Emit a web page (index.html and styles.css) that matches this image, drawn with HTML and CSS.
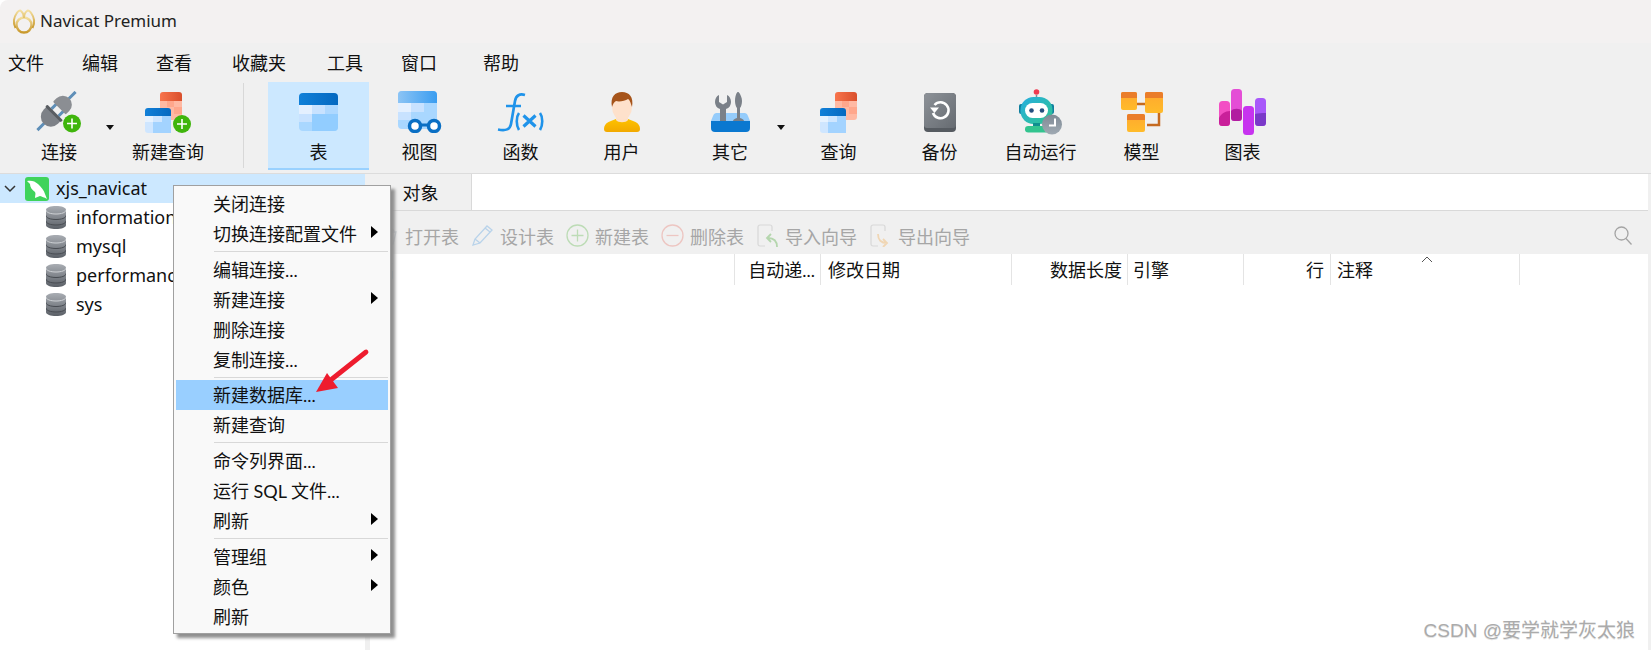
FILE: index.html
```html
<!DOCTYPE html>
<html lang="zh-CN">
<head>
<meta charset="utf-8">
<title>Navicat Premium</title>
<link rel="stylesheet" href="styles.css">
</head>
<body>
<svg class="defs" width="0" height="0">
  <defs>
    <linearGradient id="blueHead" x1="0" y1="0" x2="1" y2="0"><stop offset="0" stop-color="#1180d8"/><stop offset="1" stop-color="#0468c0"/></linearGradient>
    <linearGradient id="viewHead" x1="0" y1="0" x2="1" y2="0"><stop offset="0" stop-color="#8cc4f5"/><stop offset="1" stop-color="#3a9df0"/></linearGradient>
    <linearGradient id="redHead" x1="0" y1="0" x2="1" y2="0"><stop offset="0" stop-color="#f8744c"/><stop offset="1" stop-color="#d94f2c"/></linearGradient>
    <linearGradient id="backup" x1="0" y1="0" x2="1" y2="1"><stop offset="0" stop-color="#8d9298"/><stop offset="1" stop-color="#666b71"/></linearGradient>
    <linearGradient id="robot" x1="0" y1="0" x2="1" y2="1"><stop offset="0" stop-color="#27aee0"/><stop offset="1" stop-color="#2fc48f"/></linearGradient>
    <linearGradient id="orange" x1="0" y1="0" x2="0" y2="1"><stop offset="0" stop-color="#ffa82e"/><stop offset="1" stop-color="#ffbb2a"/></linearGradient>
    <linearGradient id="user" x1="0" y1="0" x2="0" y2="1"><stop offset="0" stop-color="#ffc400"/><stop offset="1" stop-color="#f2a900"/></linearGradient>
    <linearGradient id="dbGrey" x1="0" y1="0" x2="0" y2="1"><stop offset="0" stop-color="#a9adb3"/><stop offset="1" stop-color="#5b6067"/></linearGradient>
    <linearGradient id="clock" x1="0" y1="0" x2="0" y2="1"><stop offset="0" stop-color="#7f8a95"/><stop offset="1" stop-color="#a0aab3"/></linearGradient>
    <linearGradient id="gold" x1="0" y1="0" x2="0" y2="1"><stop offset="0" stop-color="#f3de9e"/><stop offset="1" stop-color="#c9992c"/></linearGradient>
    <clipPath id="tableClip"><rect width="39" height="38" rx="4"/></clipPath>
    <symbol id="queryPair" viewBox="0 0 37 41">
      <path d="M15 3a3 3 0 0 1 3-3h16a3 3 0 0 1 3 3v6H15z" fill="url(#redHead)"/>
      <path d="M15 9h22v16a3 3 0 0 1-3 3H15z" fill="#ffb9a3"/>
      <path d="M22 9h7v6h-7zM29 15h8v7h-8z" fill="#ffa78c"/>
      <path d="M0 19a3 3 0 0 1 3-3h20a3 3 0 0 1 3 3v5H0z" fill="url(#blueHead)"/>
      <path d="M0 24h26v14a3 3 0 0 1-3 3H3a3 3 0 0 1-3-3z" fill="#cfe6ff"/>
      <path d="M0 24h8v6H0z" fill="#e6f2ff"/><path d="M17 24h9v6h-9zM8 30h9v11H8zM17 30h9v11h-9z" fill="#a3d3ff"/>
    </symbol>
    <symbol id="dbIcon" viewBox="0 0 20 23">
      <path d="M0 4c0-2.500 4.500-4 10-4s10 1.500 10 4v15c0 2.500-4.500 4-10 4S0 21.500 0 19z" fill="url(#dbGrey)"/>
      <path d="M0 4c0 2.500 4.500 4 10 4s10-1.500 10-4" fill="none" stroke="#ced1d5" stroke-width="1"/>
      <path d="M0 9.500c0 2.500 4.500 4 10 4s10-1.500 10-4M0 15c0 2.500 4.500 4 10 4s10-1.500 10-4" fill="none" stroke="#484c52" stroke-width="1"/>
    </symbol>
    <symbol id="menuArrow" viewBox="0 0 7 12"><path d="M0 0l7 6-7 6z" fill="#000"/></symbol>
  </defs>
</svg>

<header class="titlebar">
  <svg class="logo" width="24" height="25" viewBox="0 0 24 25" fill="none" stroke="url(#gold)" stroke-width="2">
    <circle cx="12" cy="16" r="7.500" stroke-width="2.400"/>
    <path d="M3.500 19C.5 14 2 8 4.500 4.500 6 2 8 1 9 2c2 1.500 3 4.500 3 7 0-2.500 1-5.500 3-7 1-1 3 0 4.500 2.500C22 8 23.500 14 20.500 19"/>
  </svg>
  <span class="title-text">Navicat Premium</span>
</header>

<nav class="menubar">
  <span>文件</span><span>编辑</span><span>查看</span><span>收藏夹</span><span>工具</span><span>窗口</span><span>帮助</span>
</nav>

<section class="toolbar">
  <div class="tool tool-connect">
    <span class="tool-icon">
      <svg width="46" height="42" viewBox="0 0 46 42">
        <g transform="translate(20.500 20) rotate(-45)">
          <path d="M-27-1.500h11v3h-11zM-2-6.500h10v3H-2zM-2 3.500h10v3H-2zM17-1.500h10v3H17z" fill="#5f8fb8"/>
          <path d="M-3-10h-5a10 10 0 0 0-10 10 10 10 0 0 0 10 10h5z" fill="#7d8187"/>
          <rect x="-5" y="-11" width="3" height="22" rx="1" fill="#595d62"/>
          <path d="M5-9h4a9 9 0 0 1 9 9 9 9 0 0 1-9 9H5a1 1 0 0 1-1-1V-8a1 1 0 0 1 1-1z" fill="#8b8e93"/>
        </g>
        <circle cx="36" cy="32.500" r="9" fill="#3fb50c"/><path d="M36 27.500v10M31 32.500h10" stroke="#fff" stroke-width="1.600"/>
      </svg>
    </span>
    <span class="tool-label">连接</span>
    <i class="drop"></i>
  </div>
  <div class="tool tool-newquery">
    <span class="tool-icon">
      <svg width="46" height="41" viewBox="0 0 46 41">
        <use href="#queryPair" width="37" height="41"/>
        <circle cx="37" cy="32" r="9" fill="#3fb50c"/><path d="M37 27v10M32 32h10" stroke="#fff" stroke-width="1.600"/>
      </svg>
    </span>
    <span class="tool-label">新建查询</span>
  </div>
  <div class="tool-sep"></div>
  <div class="tool tool-active">
    <span class="tool-icon">
      <svg width="39" height="38" viewBox="0 0 39 38">
        <g clip-path="url(#tableClip)">
          <rect width="39" height="38" fill="#a9d7ff"/>
          <rect width="39" height="12" fill="url(#blueHead)"/>
          <rect y="12" width="13" height="9" fill="#e4f0ff"/><rect x="13" y="12" width="13" height="9" fill="#c8e2ff"/><rect x="26" y="12" width="13" height="9" fill="#aed8ff"/>
          <rect y="21" width="13" height="8" fill="#c8e2ff"/><rect x="13" y="21" width="26" height="17" fill="#92cdff"/>
        </g>
      </svg>
    </span>
    <span class="tool-label">表</span>
  </div>
  <div class="tool">
    <span class="tool-icon">
      <svg width="44" height="42" viewBox="0 0 44 42">
        <g clip-path="url(#tableClip)">
          <rect width="39" height="38" fill="#a9d7ff"/>
          <rect width="39" height="12" fill="url(#viewHead)"/>
          <rect y="12" width="13" height="9" fill="#e4f0ff"/><rect x="13" y="12" width="13" height="9" fill="#c8e2ff"/><rect y="21" width="13" height="8" fill="#c8e2ff"/>
        </g>
        <circle cx="17" cy="35" r="5.500" fill="#fff" stroke="#0a6fc4" stroke-width="3.500"/><circle cx="36" cy="35" r="5.500" fill="#fff" stroke="#0a6fc4" stroke-width="3.500"/><path d="M22 34h9" stroke="#0a6fc4" stroke-width="3"/>
      </svg>
    </span>
    <span class="tool-label">视图</span>
  </div>
  <div class="tool">
    <span class="tool-icon">
      <svg width="47" height="39" viewBox="0 0 47 39" fill="none" stroke="#1f93ea">
        <path d="M28 2c-5-1.500-9 0-10 6L14 31c-1 5.500-5 7-13 5.500M9 13h15" stroke-width="2.700"/>
        <path d="M22 20c-3 4-3 12 0 17M43 20c3 4 3 12 0 17" stroke-width="2.600"/>
        <path d="M26.500 22.500l12 11M38.500 22.500l-12 11" stroke-width="3.200"/>
      </svg>
    </span>
    <span class="tool-label">函数</span>
  </div>
  <div class="tool">
    <span class="tool-icon">
      <svg width="36" height="40" viewBox="0 0 36 40">
        <path d="M0 37c0-3 1.500-5.500 4.500-7 3-1.500 7-2.500 9.500-4h8c2.500 1.500 6.500 2.500 9.500 4 3 1.500 4.500 4 4.500 7a3 3 0 0 1-3 3H3a3 3 0 0 1-3-3z" fill="url(#user)"/>
        <path d="M12 22h12v6c-2 3-10 3-12 0z" fill="#fde0c8"/>
        <ellipse cx="18" cy="15" rx="10" ry="13" fill="#fee1cb"/>
        <path d="M8 15C6 5 11 0 18 0s12 5 10 15c-1-3-2-7-4-8-3 2-9 3-12 2-2 1-3 3-4 6z" fill="#a6541a"/>
      </svg>
    </span>
    <span class="tool-label">用户</span>
  </div>
  <div class="tool tool-other">
    <span class="tool-icon">
      <svg width="39" height="40" viewBox="0 0 39 40">
        <path d="M5 21h29a4 4 0 0 1 3 3l2 5H0l2-5a4 4 0 0 1 3-3z" fill="#95ccfb"/>
        <path d="M0 29h39v7a4 4 0 0 1-4 4H4a4 4 0 0 1-4-4z" fill="#0a78d0"/>
        <path d="M9 29V17a7.500 7.500 0 0 1-5-7c0-3 1.500-6 4-7v7l4 2.500L16 10V3c2.500 1 4 4 4 7a7.500 7.500 0 0 1-5 7v12z" fill="#7a8088"/>
        <path d="M26.500 0h1c2 2 3.500 6 3.500 9s-1 6-2 7v10c2 .5 4 1.500 4 3H22c0-1.500 2-2.500 4-3V16c-1-1-2-4-2-7s.5-7 2.500-9z" fill="#7a8088"/>
      </svg>
    </span>
    <span class="tool-label">其它</span>
    <i class="drop"></i>
  </div>
  <div class="tool">
    <span class="tool-icon"><svg width="37" height="41"><use href="#queryPair" width="37" height="41"/></svg></span>
    <span class="tool-label">查询</span>
  </div>
  <div class="tool">
    <span class="tool-icon">
      <svg width="32" height="39" viewBox="0 0 32 39">
        <rect width="32" height="39" rx="4" fill="#565b61"/>
        <path d="M0 4a4 4 0 0 1 4-4h24a4 4 0 0 1 4 4v28a3 3 0 0 1-3 3H3a3 3 0 0 1-3-3z" fill="url(#backup)"/>
        <path d="M10.500 12a8 8 0 1 1-1.500 8" fill="none" stroke="#fff" stroke-width="2.600"/>
        <path d="M6 14.500h9L10.500 20z" fill="#fff"/>
      </svg>
    </span>
    <span class="tool-label">备份</span>
  </div>
  <div class="tool">
    <span class="tool-icon">
      <svg width="44" height="46" viewBox="0 0 44 46">
        <path d="M17.500 6v6" stroke="#7f8a95" stroke-width="1.500"/><circle cx="17.500" cy="3" r="2.800" fill="#ef3b50"/>
        <rect x="0" y="15" width="5" height="10" rx="2" fill="#0f7f9e"/><rect x="30" y="15" width="5" height="10" rx="2" fill="#0f7f9e"/>
        <rect x="1.500" y="8" width="32" height="27" rx="13" fill="url(#robot)"/>
        <rect x="6" y="14" width="23" height="15" rx="7.500" fill="#fff"/>
        <circle cx="12.500" cy="21.500" r="2.300" fill="#24507f"/><circle cx="23" cy="21.500" r="2.300" fill="#24507f"/>
        <rect x="14" y="34" width="7" height="4" fill="#0f8f8f"/><rect x="6" y="37" width="24" height="6.500" rx="3.200" fill="#33c48f"/>
        <circle cx="33" cy="35.500" r="10" fill="url(#clock)"/><path d="M36 29.500v7h-6" fill="none" stroke="#fff" stroke-width="2"/>
      </svg>
    </span>
    <span class="tool-label">自动运行</span>
  </div>
  <div class="tool">
    <span class="tool-icon">
      <svg width="42" height="40" viewBox="0 0 42 40">
        <path d="M15 12h10M38 20v13h-12" fill="none" stroke="#c56a20" stroke-width="2.500"/>
        <rect x="0" width="16" height="18" rx="2" fill="url(#orange)"/><path d="M0 6V2a2 2 0 0 1 2-2h12a2 2 0 0 1 2 2v4z" fill="#ea7d2a"/>
        <rect x="24" width="18" height="21" rx="2" fill="url(#orange)"/><path d="M24 6V2a2 2 0 0 1 2-2h14a2 2 0 0 1 2 2v4z" fill="#ea7d2a"/>
        <rect x="6" y="22" width="18" height="18" rx="2" fill="url(#orange)"/><path d="M6 28v-4a2 2 0 0 1 2-2h14a2 2 0 0 1 2 2v4z" fill="#ea7d2a"/>
      </svg>
    </span>
    <span class="tool-label">模型</span>
  </div>
  <div class="tool">
    <span class="tool-icon">
      <svg width="47" height="46" viewBox="0 0 47 46">
        <rect x="0" y="12" width="11" height="25" rx="3.500" fill="#f34fc4"/><path d="M0 33.500a3.500 3.500 0 0 0 3.500 3.500h4a3.500 3.500 0 0 0 3.500-3.500V22c-5 0-9 3-11 7z" fill="#c9209a"/>
        <rect x="12" y="0" width="11" height="32" rx="3.500" fill="#e44dd6"/><path d="M12 28.500a3.500 3.500 0 0 0 3.500 3.500h4a3.500 3.500 0 0 0 3.500-3.500V22c-2-3-9-3-11 0z" fill="#b11ea0"/>
        <rect x="24" y="17" width="11" height="29" rx="3.500" fill="#c733ef"/>
        <rect x="36" y="9" width="11" height="28" rx="3.500" fill="#a858fa"/><path d="M36 33.500a3.500 3.500 0 0 0 3.500 3.500h4a3.500 3.500 0 0 0 3.500-3.500V24c-4 0-8 0-11 1z" fill="#7a39c8"/>
      </svg>
    </span>
    <span class="tool-label">图表</span>
  </div>
</section>

<main class="workspace">
  <aside class="tree">
    <div class="tree-row tree-root">
      <svg class="chevron" width="12" height="8" viewBox="0 0 12 8"><path d="M1 1l5 5 5-5" fill="none" stroke="#333" stroke-width="1.500"/></svg>
      <svg class="conn-icon" width="24" height="24" viewBox="0 0 24 24"><rect width="24" height="24" rx="3" fill="#3fd35b"/><path d="M2 4C6 3 10 4 13 7c3 3 6 6 7 10l2 5c-3-2-5-2-7-3l-5 2c0-3 1-4 0-6-3-2-5-5-5-8-1-1-2-2-3-3z" fill="#fff"/></svg>
      <span>xjs_navicat</span>
    </div>
    <div class="tree-row tree-db"><svg width="20" height="23"><use href="#dbIcon"/></svg><span>information_schema</span></div>
    <div class="tree-row tree-db"><svg width="20" height="23"><use href="#dbIcon"/></svg><span>mysql</span></div>
    <div class="tree-row tree-db"><svg width="20" height="23"><use href="#dbIcon"/></svg><span>performance_schema</span></div>
    <div class="tree-row tree-db"><svg width="20" height="23"><use href="#dbIcon"/></svg><span>sys</span></div>
  </aside>
  <div class="splitter"></div>
  <section class="content">
    <div class="tabbar"><div class="tab">对象</div></div>
    <div class="actions">
      <div class="action"><svg width="23" height="23" viewBox="0 0 23 23" fill="none" stroke="#cfd3d8" stroke-width="1.300"><path d="M3 8h17l-3 12H6z"/><path d="M7 8c0-4 9-5 11-1"/></svg><span>打开表</span></div>
      <div class="action"><svg width="23" height="23" viewBox="0 0 23 23" fill="none" stroke="#b9d3ea" stroke-width="1.300"><path d="M2 21l2-6L16 2l5 4L9 19z"/><path d="M4 15l5 4M14 4l5 4"/></svg><span>设计表</span></div>
      <div class="action"><svg width="23" height="23" viewBox="0 0 23 23" fill="none" stroke="#bddcb6" stroke-width="1.300"><circle cx="11.500" cy="11.500" r="10.500"/><path d="M11.500 5.500v12M5.500 11.500h12"/></svg><span>新建表</span></div>
      <div class="action"><svg width="23" height="23" viewBox="0 0 23 23" fill="none" stroke="#edc6c2" stroke-width="1.300"><circle cx="11.500" cy="11.500" r="10.500"/><path d="M5.500 11.500h12"/></svg><span>删除表</span></div>
      <div class="action"><svg width="23" height="23" viewBox="0 0 23 23" fill="none"><path d="M9 22H4a2 2 0 0 1-2-2V3a2 2 0 0 1 2-2h10a2 2 0 0 1 2 2v4" stroke="#d8d8d8" stroke-width="1.200"/><path d="M21 23c0-6-3-9-9-9M15 10l-4 4 4 4" stroke="#b5d6ae" stroke-width="1.800"/></svg><span>导入向导</span></div>
      <div class="action"><svg width="23" height="23" viewBox="0 0 23 23" fill="none"><path d="M9 22H4a2 2 0 0 1-2-2V3a2 2 0 0 1 2-2h10a2 2 0 0 1 2 2v4" stroke="#d8d8d8" stroke-width="1.200"/><path d="M9 10c0 6 3 9 9 9M14 15l4 4-4 4" stroke="#f0d6b4" stroke-width="1.800"/></svg><span>导出向导</span></div>
      <svg class="search" width="18" height="19" viewBox="0 0 18 19" fill="none" stroke="#a4a4a4" stroke-width="1.300"><circle cx="7.500" cy="7.500" r="6.500"/><path d="M12 12.500l5.500 6"/></svg>
    </div>
    <div class="thead">
      <div class="th th-name">名</div>
      <div class="th th-auto">自动递...</div>
      <div class="th th-date">修改日期</div>
      <div class="th th-len">数据长度</div>
      <div class="th th-engine">引擎</div>
      <div class="th th-rows">行</div>
      <div class="th th-comment">注释<svg class="sort" width="12" height="7" viewBox="0 0 12 7"><path d="M1 6l5-5 5 5" fill="none" stroke="#555" stroke-width="1"/></svg></div>
    </div>
  </section>
  <div class="edge"></div>
</main>

<div class="context-menu">
  <div class="cm-item">关闭连接</div>
  <div class="cm-item">切换连接配置文件<svg class="cm-arrow" width="7" height="12"><use href="#menuArrow"/></svg></div>
  <div class="cm-sep"></div>
  <div class="cm-item">编辑连接...</div>
  <div class="cm-item">新建连接<svg class="cm-arrow" width="7" height="12"><use href="#menuArrow"/></svg></div>
  <div class="cm-item">删除连接</div>
  <div class="cm-item">复制连接...</div>
  <div class="cm-sep cm-sep-tight"></div>
  <div class="cm-item cm-hover">新建数据库...</div>
  <div class="cm-item">新建查询</div>
  <div class="cm-sep"></div>
  <div class="cm-item">命令列界面...</div>
  <div class="cm-item">运行 SQL 文件...</div>
  <div class="cm-item">刷新<svg class="cm-arrow" width="7" height="12"><use href="#menuArrow"/></svg></div>
  <div class="cm-sep"></div>
  <div class="cm-item">管理组<svg class="cm-arrow" width="7" height="12"><use href="#menuArrow"/></svg></div>
  <div class="cm-item">颜色<svg class="cm-arrow" width="7" height="12"><use href="#menuArrow"/></svg></div>
  <div class="cm-item">刷新</div>
</div>

<svg class="red-arrow" width="56" height="46" viewBox="0 0 56 46"><path d="M51 4L17 31" stroke="#ee1c2e" stroke-width="4.800" stroke-linecap="round"/><path d="M1 44L12 25l11 15z" fill="#ee1c2e"/></svg>

<div class="watermark">CSDN @要学就学灰太狼</div>
</body>
</html>
```

FILE: styles.css
```css
* { box-sizing: border-box; }

html, body {
  margin: 0;
  padding: 0;
}

body {
  position: relative;
  width: 1651px;
  height: 650px;
  overflow: hidden;
  display: flex;
  flex-direction: column;
  background: #fff;
  color: #111;
  font-family: "Noto Sans", "Noto Sans CJK SC", sans-serif;
  font-size: 18px;
}

.defs { position: absolute; }

.titlebar {
  flex: none;
  height: 43px;
  display: flex;
  align-items: center;
  padding-left: 12px;
  background: #f3f1f1;
  border-top-left-radius: 8px;
}

.logo { flex: none; }

.title-text {
  margin: 0 0 2px 4px;
  font-size: 17px;
  color: #222;
}

.menubar {
  flex: none;
  height: 39px;
  display: flex;
  align-items: center;
  gap: 38px;
  padding: 0 0 2px 8px;
  background: #f0f0f0;
  font-family: "Noto Sans CJK SC", sans-serif;
}

.menubar span:nth-child(4) { margin-left: 2px; }
.menubar span:nth-child(5) { margin-left: 3px; }
.menubar span:nth-child(7) { margin-left: 8px; }

.toolbar {
  flex: none;
  height: 92px;
  display: flex;
  padding-left: 8px;
  background: #f0f0f0;
  border-bottom: 1px solid #dcdcdc;
  font-family: "Noto Sans CJK SC", sans-serif;
}

.tool {
  position: relative;
  flex: none;
  width: 101px;
  height: 88px;
  display: flex;
  flex-direction: column;
  align-items: center;
  padding-top: 7px;
}

.tool-connect { width: 102px; }
.tool-newquery { width: 102px; margin-left: 7px; }
.tool-other { width: 116px; }

.tool-icon {
  height: 46px;
  display: flex;
  align-items: center;
  justify-content: center;
}

.tool-label {
  margin-top: 4px;
  line-height: 24px;
  white-space: nowrap;
}

.tool-active {
  background: #cce8ff;
  border-bottom: 2px solid #99d1ff;
}

.tool-sep {
  flex: none;
  width: 1px;
  height: 85px;
  margin: 1px 24px 0 24px;
  background: #d8d8d8;
}

.drop {
  position: absolute;
  top: 43px;
  width: 0;
  height: 0;
  border-left: 4px solid transparent;
  border-right: 4px solid transparent;
  border-top: 5px solid #111;
}

.tool-connect .drop { left: 98px; }
.tool-other .drop { left: 105px; }

.workspace {
  flex: 1;
  display: flex;
  min-height: 0;
}

.tree {
  flex: none;
  width: 365px;
  background: #fff;
}

.tree-row {
  height: 29px;
  display: flex;
  align-items: center;
  white-space: nowrap;
  overflow: hidden;
}

.tree-row span { padding-bottom: 2px; }

.tree-root {
  background: #cce8ff;
  padding-left: 4px;
}

.chevron { flex: none; }

.conn-icon {
  flex: none;
  margin: 0 7px 0 9px;
}

.tree-db {
  padding-left: 46px;
  gap: 10px;
}

.tree-db svg { flex: none; }

.splitter {
  flex: none;
  width: 5px;
  background: #f0f0f0;
}

.content {
  flex: 1;
  min-width: 0;
  display: flex;
  flex-direction: column;
  font-family: "Noto Sans CJK SC", sans-serif;
}

.tabbar {
  flex: none;
  height: 37px;
  display: flex;
  border-bottom: 1px solid #d9d9d9;
}

.tab {
  width: 102px;
  text-align: center;
  line-height: 36px;
  background: #f0f0f0;
  border-right: 1px solid #d9d9d9;
}

.actions {
  flex: none;
  height: 43px;
  display: flex;
  align-items: center;
  gap: 12px;
  padding: 6px 16px 0 6px;
  background: #f0f0f0;
  color: #a6a6a6;
}

.action {
  display: flex;
  align-items: center;
  gap: 6px;
  white-space: nowrap;
}

.search { margin-left: auto; }

.thead {
  flex: none;
  height: 31px;
  display: flex;
  line-height: 32px;
  white-space: nowrap;
  font-family: "Lato", "Noto Sans CJK SC", sans-serif;
}

.th {
  flex: none;
  position: relative;
  border-right: 1px solid #e4e4e4;
}

.th-name { width: 365px; padding-left: 7px; }
.th-auto { width: 86px; padding-right: 5px; text-align: right; }
.th-date { width: 191px; padding-left: 7px; }
.th-len { width: 116px; padding-right: 5px; text-align: right; }
.th-engine { width: 116px; padding-left: 5px; }
.th-rows { width: 87px; padding-right: 6px; text-align: right; }
.th-comment { width: 189px; padding-left: 6px; }

.sort {
  position: absolute;
  left: 90px;
  top: 2px;
}

.edge {
  flex: none;
  width: 3px;
  background: #f0f0f0;
}

.context-menu {
  position: absolute;
  left: 173px;
  top: 185px;
  width: 218px;
  height: 449px;
  padding: 3px 2px;
  background: #f9f9f9;
  border: 1px solid #a0a0a0;
  box-shadow: 4px 4px 3px #8f8f8f;
  font-family: "Lato", "Noto Sans CJK SC", sans-serif;
}

.cm-item {
  position: relative;
  height: 30px;
  line-height: 30px;
  padding-left: 37px;
  white-space: nowrap;
}

.cm-hover { background: #99cfff; }

.cm-arrow {
  position: absolute;
  left: 195px;
  top: 7px;
}

.cm-sep {
  height: 6px;
  margin-left: 38px;
  position: relative;
}

.cm-sep::after {
  content: "";
  position: absolute;
  left: 0;
  right: 0;
  top: 2px;
  height: 1px;
  background: #d8d8d8;
}

.cm-sep-tight { height: 5px; }

.red-arrow {
  position: absolute;
  left: 315px;
  top: 348px;
}

.watermark {
  position: absolute;
  right: 16px;
  top: 618px;
  line-height: 26px;
  font-size: 19px;
  color: #ababab;
  font-family: "Liberation Sans", "Noto Sans CJK SC", sans-serif;
  text-shadow: 0 1px 0 #e4e4e4;
}
```
